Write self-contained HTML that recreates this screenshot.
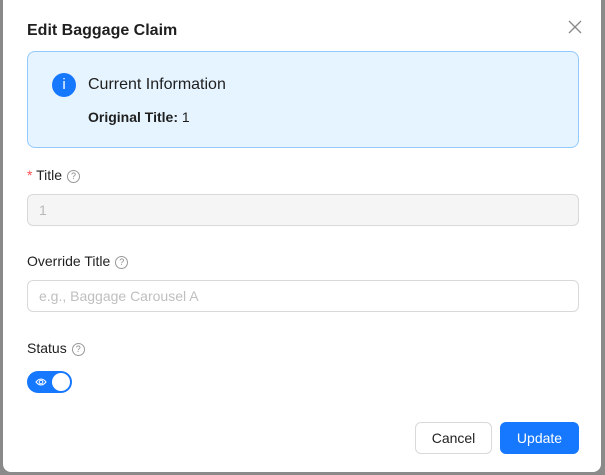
<!DOCTYPE html>
<html><head><style>
*{box-sizing:border-box;margin:0;padding:0}
body{width:605px;height:475px;background:#8a8a8a;font-family:"Liberation Sans",sans-serif;position:relative;overflow:hidden;color:#1f1f1f}
.m{position:absolute;left:3px;top:-10px;width:598px;height:482px;background:#fff;border-radius:8px}
.t{position:absolute;left:27px;top:22px;font-size:16px;font-weight:bold;color:#1f1f1f}
.x{position:absolute;left:567px;top:19px;width:16px;height:16px}
.info{position:absolute;left:27px;top:51px;width:552px;height:97px;background:#e6f4ff;border:1px solid #91caff;border-radius:8px}
.ic{position:absolute;left:24px;top:21px;width:24px;height:24px;border-radius:50%;background:#1677ff;color:#fff;font-size:15px;text-align:center;line-height:24px}
.ih{position:absolute;left:60px;top:24px;font-size:16px}
.ib{position:absolute;left:60px;top:57px;font-size:14px}
.lbl{position:absolute;left:27px;font-size:14px}
.q{display:inline-block;width:13px;height:13px;border:1px solid #999;border-radius:50%;font-size:9px;color:#888;text-align:center;line-height:11px;vertical-align:1px;margin-left:5px}
.in{position:absolute;left:27px;width:552px;height:32px;border:1px solid #d9d9d9;border-radius:6px;font-size:14px;padding:7px 11px}
.sw{position:absolute;left:27px;top:371px;width:45px;height:22px;border-radius:11px;background:#1677ff}
.knob{position:absolute;right:2px;top:2px;width:18px;height:18px;border-radius:50%;background:#fff}
.btn{position:absolute;top:422px;height:32px;border-radius:6px;font-size:14px;text-align:center;line-height:30px}
</style></head><body>
<div class="m"></div>
<div class="t">Edit Baggage Claim</div>
<svg class="x" viewBox="0 0 16 16"><path d="M2 2L14 14M14 2L2 14" stroke="#888" stroke-width="1.3"/></svg>
<div class="info"><div class="ic">i</div><div class="ih">Current Information</div><div class="ib"><b>Original Title:</b> 1</div></div>
<div class="lbl" style="top:167px"><span style="color:#ff4d4f">*</span> Title<span class="q">?</span></div>
<div class="in" style="top:194px;background:#f5f5f5;color:#b8b8b8">1</div>
<div class="lbl" style="top:253px">Override Title<span class="q">?</span></div>
<div class="in" style="top:280px;color:#bfbfbf">e.g., Baggage Carousel A</div>
<div class="lbl" style="top:340px">Status<span class="q">?</span></div>
<div class="sw"><svg style="position:absolute;left:8px;top:6px" width="12" height="10" viewBox="0 0 12 10"><path d="M1 5Q6 -1 11 5Q6 11 1 5Z" fill="none" stroke="#fff" stroke-width="1"/><circle cx="6" cy="5" r="1.8" fill="none" stroke="#fff" stroke-width="1"/></svg><div class="knob"></div></div>
<div class="btn" style="left:415px;width:77px;border:1px solid #d9d9d9;background:#fff">Cancel</div>
<div class="btn" style="left:500px;width:79px;background:#1677ff;color:#fff;line-height:32px">Update</div>
</body></html>
